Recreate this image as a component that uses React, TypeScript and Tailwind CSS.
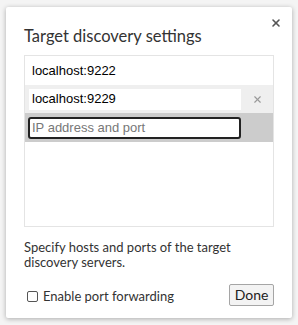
import { X } from "lucide-react";

const arial = "font-['Liberation_Sans',Arial,sans-serif]";
const ui = "font-['Lato','Noto_Sans',sans-serif]";

export default function App() {
  return (
    <div className="w-[298px] h-[325px] bg-[#f4f4f4] pl-[6px] pt-[7px] pr-[6px]">
      <div className={`relative w-[286px] h-[311px] bg-white rounded-[2px] shadow-[0_1px_5px_rgba(0,0,0,0.3)] flex flex-col px-[18px] pt-[16px] ${ui}`}>
        <button className="absolute top-[9px] right-[9px] w-[14px] h-[14px] flex items-center justify-center text-[#555]">
          <X size={12} strokeWidth={3.2} />
        </button>

        <h1 className="text-[16.5px] leading-[26px] text-[#333]">Target discovery settings</h1>

        <div className="mt-[6px] h-[172px] border border-[#e4e4e4] flex flex-col">
          <div className={`h-[29px] flex items-center pl-[7px] text-[13px] text-black ${arial}`}>localhost:9222</div>
          <div className="h-[28px] bg-[#efefef] flex items-center pl-[4px]">
            <div className={`w-[212px] h-[21px] bg-white flex items-center pl-[3px] text-[13px] text-black ${arial}`}>localhost:9229</div>
            <div className="flex-1 flex items-center justify-center text-[#9a9a9a]">
              <X size={11} strokeWidth={2.5} />
            </div>
          </div>
          <div className="h-[29px] bg-[#cccccc] flex items-center pl-[3px]">
            <div className={`w-[213px] h-[22px] bg-white border-2 border-[#222] rounded-[3px] flex items-center pl-[2px] text-[13px] text-[#777] ${arial}`}>
              IP address and port
            </div>
          </div>
        </div>

        <p className="mt-[13px] text-[13px] leading-[15px] text-[#333]">
          Specify hosts and ports of the target discovery servers.
        </p>

        <div className="mt-[14px] flex items-center justify-between">
          <label className="flex items-center gap-[5px] pl-[3px] pt-[3px] text-[13px] text-[#333]">
            <span className="w-[11px] h-[11px] border border-[#555] rounded-[2px] bg-white" />
            Enable port forwarding
          </label>
          <button className="w-[45px] h-[22px] border border-[#a5a5a5] rounded-[2px] bg-[#f3f3f3] text-[14px] text-[#222] leading-none">
            Done
          </button>
        </div>
      </div>
    </div>
  );
}
